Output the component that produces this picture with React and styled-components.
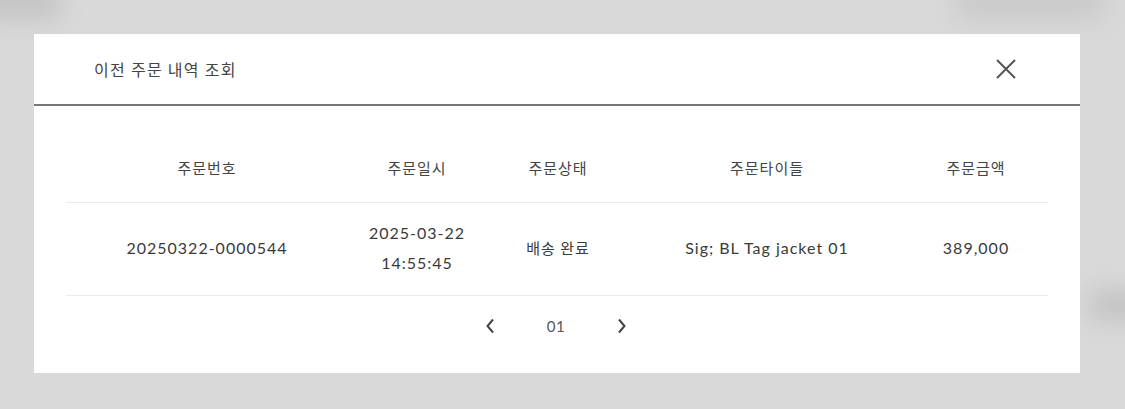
import React from 'react'
import styled, { createGlobalStyle } from 'styled-components'

const GlobalStyle = createGlobalStyle`
  html, body {
    margin: 0;
    padding: 0;
    background: #d9d9d9;
  }
  * { box-sizing: border-box; }
  body {
    font-family: "Lato", "Noto Sans CJK KR", sans-serif;
  }
`

const Backdrop = styled.div`
  position: relative;
  width: 1125px;
  height: 409px;
  overflow: hidden;
  background: #d9d9d9;
  padding: 34px 0 0 34px;
`

const Blur = styled.div`
  position: absolute;
  background: ${props => props.tone || '#c4c4c4'};
  filter: blur(12px);
  border-radius: 8px;
`

const Modal = styled.div`
  position: relative;
  width: 1046px;
  height: 339px;
  background: #fff;
  display: flex;
  flex-direction: column;
`

const Header = styled.div`
  height: 72px;
  display: flex;
  align-items: center;
  justify-content: space-between;
  padding: 0 62px 0 60px;
  border-bottom: 2px solid #777;
`

const Title = styled.h2`
  margin: 0;
  font-size: 16px;
  font-weight: 400;
  color: #444;
  letter-spacing: 1.3px;
  font-family: "Noto Sans CJK KR", sans-serif;
`

const CloseButton = styled.button`
  border: 0;
  background: none;
  padding: 0;
  width: 24px;
  height: 24px;
  display: flex;
  align-items: center;
  justify-content: center;
  cursor: pointer;
`

const Body = styled.div`
  padding: 28px 32px 0 32px;
  flex: 1;
  display: flex;
  flex-direction: column;
`

const Table = styled.table`
  width: 982px;
  border-collapse: collapse;
  table-layout: fixed;
`

const Th = styled.th`
  width: ${props => props.w}px;
  height: 68px;
  padding: 0;
  font-size: 15px;
  font-weight: 400;
  letter-spacing: 1px;
  color: #444;
  text-align: center;
  border-bottom: 1px solid #eaeaea;
  font-family: "Noto Sans CJK KR", sans-serif;
`

const Td = styled.td`
  height: 93px;
  padding: 0 0 2px 0;
  font-size: ${props => props.ko ? '15px' : '16px'};
  letter-spacing: 1px;
  color: #3a3a3a;
  text-align: center;
  line-height: 30px;
  border-bottom: 1px solid #eaeaea;
  font-family: ${props => props.ko ? '"Noto Sans CJK KR", sans-serif' : '"Lato", "Noto Sans CJK KR", sans-serif'};
`

const Pager = styled.div`
  display: flex;
  justify-content: center;
  align-items: center;
  gap: 42px;
  height: 60px;
  padding-right: 2px;
`

const PageArrow = styled.button`
  border: 0;
  background: none;
  padding: 0;
  width: 24px;
  height: 24px;
  display: flex;
  align-items: center;
  justify-content: center;
  cursor: pointer;
`

const PageNum = styled.span`
  font-size: 15px;
  letter-spacing: 0.5px;
  color: #555;
  width: 24px;
  text-align: center;
`

const cols = [
  { label: '주문번호', w: 282 },
  { label: '주문일시', w: 138 },
  { label: '주문상태', w: 144 },
  { label: '주문타이들', w: 274 },
  { label: '주문금액', w: 144 },
]

const Chevron = ({ dir }) => (
  <svg width="10" height="16" viewBox="0 0 10 16">
    <path
      d={dir === 'left' ? 'M8 1.5 L2.5 8 L8 14.5' : 'M2 1.5 L7.5 8 L2 14.5'}
      fill="none"
      stroke="#444"
      strokeWidth="2"
    />
  </svg>
)

export default function App() {
  return (
    <Backdrop>
      <GlobalStyle />
      <Blur style={{ left: -20, top: -20, width: 80, height: 40 }} />
      <Blur style={{ left: 955, top: -20, width: 150, height: 40 }} tone="#cacaca" />
      <Blur style={{ left: 1090, top: 290, width: 60, height: 30 }} tone="#c2c2c2" />
      <Modal>
        <Header>
          <Title>이전 주문 내역 조회</Title>
          <CloseButton aria-label="close">
            <svg width="22" height="22" viewBox="0 0 22 22">
              <path d="M2 2 L20 20 M20 2 L2 20" stroke="#555" strokeWidth="2" fill="none" />
            </svg>
          </CloseButton>
        </Header>
        <Body>
          <Table>
            <thead>
              <tr>
                {cols.map(c => <Th key={c.label} w={c.w}>{c.label}</Th>)}
              </tr>
            </thead>
            <tbody>
              <tr>
                <Td>20250322-0000544</Td>
                <Td>2025-03-22<br />14:55:45</Td>
                <Td ko>배송 완료</Td>
                <Td>Sig; BL Tag jacket 01</Td>
                <Td>389,000</Td>
              </tr>
            </tbody>
          </Table>
          <Pager>
            <PageArrow aria-label="prev"><Chevron dir="left" /></PageArrow>
            <PageNum>01</PageNum>
            <PageArrow aria-label="next"><Chevron dir="right" /></PageArrow>
          </Pager>
        </Body>
      </Modal>
    </Backdrop>
  )
}
